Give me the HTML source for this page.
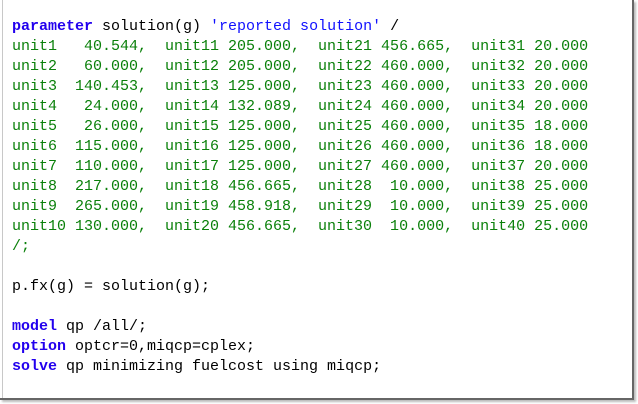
<!DOCTYPE html>
<html><head><style>
html,body{margin:0;padding:0;background:#fff;width:638px;height:404px;overflow:hidden}
.frame{position:absolute;left:0;top:0;width:632px;height:398px;border-right:2px solid #666;border-bottom:2px solid #666;box-shadow:2px 2px 2px #bbb}
.lb{position:absolute;left:2px;top:0;width:1px;height:398px;background:#c8c8c8}
pre{position:absolute;left:12px;top:17px;margin:0;font-family:"Liberation Mono",monospace;font-size:15px;line-height:20px;color:#000}
.k{color:#2200ee;font-weight:bold}
.s{color:#1010ff}
.g{color:#0a800a}
</style></head><body>
<div class="frame"></div><div class="lb"></div>
<pre><span class="k">parameter</span> solution(g) <span class="s">'reported solution'</span> /
<span class="g">unit1   40.544,  unit11 205.000,  unit21 456.665,  unit31 20.000
unit2   60.000,  unit12 205.000,  unit22 460.000,  unit32 20.000
unit3  140.453,  unit13 125.000,  unit23 460.000,  unit33 20.000
unit4   24.000,  unit14 132.089,  unit24 460.000,  unit34 20.000
unit5   26.000,  unit15 125.000,  unit25 460.000,  unit35 18.000
unit6  115.000,  unit16 125.000,  unit26 460.000,  unit36 18.000
unit7  110.000,  unit17 125.000,  unit27 460.000,  unit37 20.000
unit8  217.000,  unit18 456.665,  unit28  10.000,  unit38 25.000
unit9  265.000,  unit19 458.918,  unit29  10.000,  unit39 25.000
unit10 130.000,  unit20 456.665,  unit30  10.000,  unit40 25.000
/;</span>

p.fx(g) = solution(g);

<span class="k">model</span> qp /all/;
<span class="k">option</span> optcr=0,miqcp=cplex;
<span class="k">solve</span> qp minimizing fuelcost using miqcp;
</pre>
</body></html>
